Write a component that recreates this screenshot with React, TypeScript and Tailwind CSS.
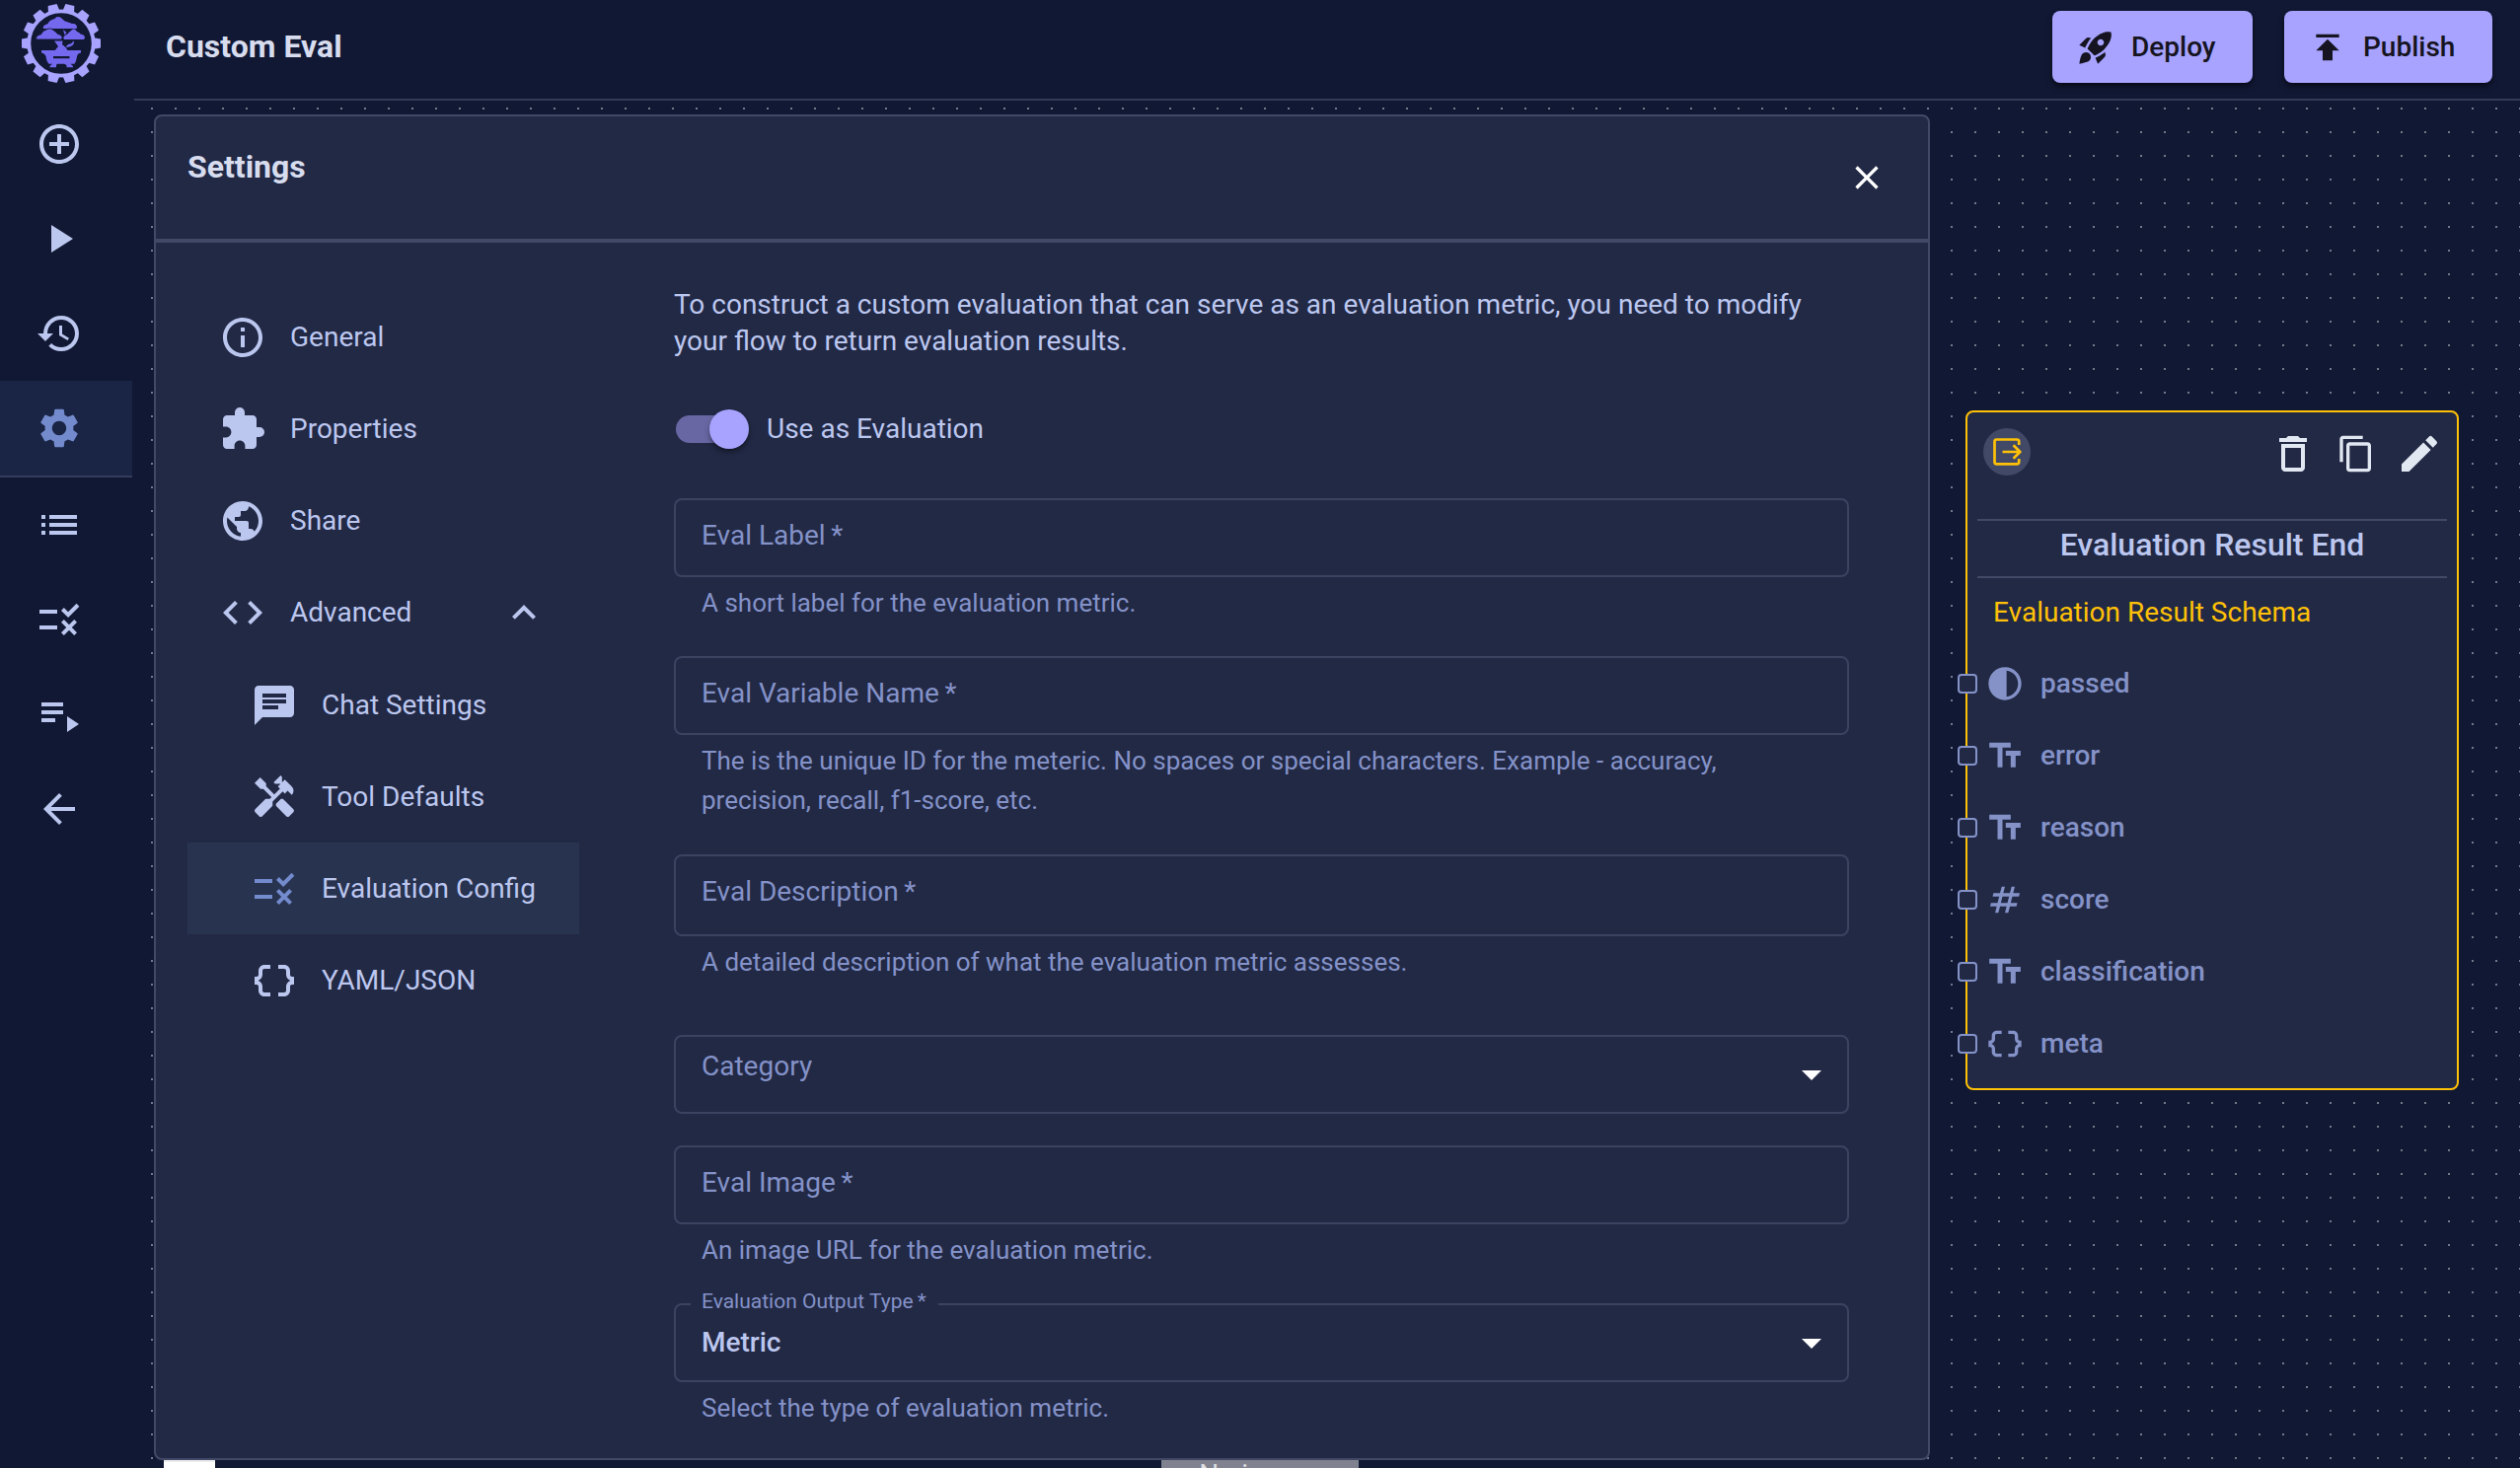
import React from "react";
import {
  MdAddCircleOutline,
  MdArrowBack,
  MdArrowDropDown,
  MdChat,
  MdClose,
  MdCode,
  MdContentCopy,
  MdContrast,
  MdDataObject,
  MdDeleteOutline,
  MdEdit,
  MdExpandLess,
  MdExtension,
  MdHandyman,
  MdHistory,
  MdInfoOutline,
  MdList,
  MdNumbers,
  MdPlayArrow,
  MdPlaylistPlay,
  MdPublic,
  MdPublish,
  MdRocketLaunch,
  MdRule,
  MdSettings,
  MdTextFields,
} from "react-icons/md";
import type { IconType } from "react-icons";

const TEETH = Array.from({ length: 14 }, (_, i) => (i * 360) / 14);

function Logo() {
  return (
    <svg viewBox="-40 -40 80 80" className="size-20" aria-label="Logo" role="img">
      <g fill="#a7a3ff">
        {TEETH.map((angle) => (
          <path key={angle} d="M32 -6 L40 -4.6 V4.6 L32 6 Z" transform={`rotate(${angle})`} />
        ))}
      </g>
      <circle r="32.7" fill="#111833" stroke="#a7a3ff" strokeWidth="3.8" />
      <g fill="#7468ee">
        <path d="M-18 -15 C-19 -18 -16 -19 -13.500 -20 C-12 -24 -8 -24 -6 -25.500 C-4 -28 -1 -27 1 -25 C3 -22.500 5 -22 7 -21.500 C9 -21 10 -20.500 11 -20 C15 -20.500 17 -17.500 15.500 -15 Z" />
        <path d="M-25 -4 C-26.500 -7 -23 -8.500 -20 -9.500 C-19 -13 -16 -13 -15 -14 C-12 -16 -9 -15 -7.500 -13 C-6 -12 -5 -11.500 -3.500 -9.500 C0 -9 2 -6.500 0.500 -4 Z" stroke="#111833" strokeWidth="0.8" />
        <path d="M3 -4 C1 -6.500 4 -8.500 6.500 -9.500 C8 -12 10 -12.500 11 -14 C13.500 -15.500 15 -13.500 16 -12 C17.500 -11.500 18.500 -11 19.500 -9.500 C23 -9 25.500 -6.500 23 -4 Z" />
        <path d="M2 -14 L5.500 -11 L3.500 -8.500 Z" />
        <path d="M-7 -2.500 H1.500 L1 1 L5 4.500 L7 8 H-7 L-3 3 Z" />
        <path d="M5 4 C6 1.500 6 1.500 9 0.500 C11 0 11.500 -1.500 12.500 -2.500 C14 0 11.500 2.500 9.500 3 C8 3.500 6.500 4 5 4 Z" />
        <path
          fillRule="evenodd"
          d="M-20 7 H20 V9.500 C17.500 10 16.500 11 16 13 C15.500 16 15 18.500 13.500 20.700 H9.500 L12 23 V24.300 H5.500 V22 L3 20.700 H-4 L-5 22 V24.300 H-11.500 V23 L-9 20.700 H-12.500 C-14.500 18.500 -15 16 -15.500 13 C-16.500 11 -17.500 10 -20 9.500 Z M-8 13 V15.300 H8.500 V13 Z"
        />
      </g>
    </svg>
  );
}

function ExitIcon() {
  return (
    <svg
      viewBox="0 0 48 48"
      className="size-12"
      fill="none"
      stroke="#ffc107"
      strokeWidth="2.700"
      strokeLinejoin="round"
      aria-hidden="true"
    >
      <path d="M36.200 17V13.500A2 2 0 0 0 34.200 11.500H13.500A2 2 0 0 0 11.500 13.500V34.300A2 2 0 0 0 13.500 36.300H34.200A2 2 0 0 0 36.200 34.300V31" />
      <path d="M19.500 24H37M30.500 17.300L37.300 24L30.500 30.700" />
    </svg>
  );
}

const railItems: { name: string; icon: IconType; active?: boolean }[] = [
  { name: "Add node", icon: MdAddCircleOutline },
  { name: "Run", icon: MdPlayArrow },
  { name: "History", icon: MdHistory },
  { name: "Settings", icon: MdSettings, active: true },
  { name: "List", icon: MdList },
  { name: "Evaluations", icon: MdRule },
  { name: "Batch runs", icon: MdPlaylistPlay },
  { name: "Back", icon: MdArrowBack },
];

function Rail() {
  return (
    <aside className="flex w-[136px] shrink-0 flex-col">
      <div className="h-[98px] pl-[22px] pt-1">
        <Logo />
      </div>
      <nav className="flex w-[134px] flex-col">
        {railItems.map(({ name, icon: Icon, active }) => (
          <button
            key={name}
            type="button"
            aria-label={name}
            className={
              active
                ? "flex h-[98px] items-center border-b-2 border-[#333c5c] bg-[#1a2444] pl-9 text-[#738acd]"
                : "flex h-24 items-center pl-9 text-[#bcc7ef]"
            }
          >
            <Icon className="size-12" />
          </button>
        ))}
      </nav>
    </aside>
  );
}

function TopBar() {
  return (
    <header className="flex h-[102px] items-center gap-8 border-b-2 border-[#333b58] pb-[5px] pl-8 pr-7">
      <h1 className="flex-1 pb-0.5 text-[32px] font-bold text-[#d7dcee]">Custom Eval</h1>
      <button
        type="button"
        className="flex h-[73px] w-[203px] items-center gap-4 rounded-lg bg-[#a7a3ff] pl-6 text-[28px] font-medium text-[#161420] shadow-md shadow-black/50"
      >
        <MdRocketLaunch className="size-10" />
        Deploy
      </button>
      <button
        type="button"
        className="flex h-[73px] w-[211px] items-center gap-4 rounded-lg bg-[#a7a3ff] pl-6 text-[28px] font-medium text-[#161420] shadow-md shadow-black/50"
      >
        <MdPublish className="size-10" />
        Publish
      </button>
    </header>
  );
}

type MenuItem = { name: string; icon: IconType; active?: boolean; open?: boolean };

const mainMenu: MenuItem[] = [
  { name: "General", icon: MdInfoOutline },
  { name: "Properties", icon: MdExtension },
  { name: "Share", icon: MdPublic },
  { name: "Advanced", icon: MdCode, open: true },
];

const advancedMenu: MenuItem[] = [
  { name: "Chat Settings", icon: MdChat },
  { name: "Tool Defaults", icon: MdHandyman },
  { name: "Evaluation Config", icon: MdRule, active: true },
  { name: "YAML/JSON", icon: MdDataObject },
];

function MenuButton({ item, indent }: { item: MenuItem; indent: string }) {
  const { name, icon: Icon, active, open } = item;
  return (
    <button
      type="button"
      aria-expanded={open}
      className={`flex h-[93px] w-full items-center gap-6 pr-8 text-left text-[28px] text-[#bcc7ef] ${indent} ${
        active ? "bg-[#28334f]" : ""
      }`}
    >
      <Icon className={active ? "size-12 shrink-0 text-[#738acd]" : "size-12 shrink-0"} />
      <span className="flex-1 whitespace-nowrap">{name}</span>
      {open && <MdExpandLess className="size-12" />}
    </button>
  );
}

function SettingsMenu() {
  return (
    <nav className="w-[397px] shrink-0 pt-[49px]">
      {mainMenu.map((item) => (
        <MenuButton key={item.name} item={item} indent="pl-8" />
      ))}
      <div className="pt-px">
        {advancedMenu.map((item) => (
          <MenuButton key={item.name} item={item} indent="pl-16" />
        ))}
      </div>
    </nav>
  );
}

function Hint({ children }: { children: React.ReactNode }) {
  return <p className="mt-1.5 px-7 text-[26px] leading-10 text-[#8492c8]">{children}</p>;
}

const boxClass = "w-full rounded-lg border-2 border-[#3b4361] bg-transparent px-[26px] text-[28px] text-[#bcc7ef]";
const labelClass = "pointer-events-none absolute left-7 top-0 text-[28px] text-[#8492c8]";

function TextField({
  id,
  label,
  hint,
  className,
  multiline,
}: {
  id: string;
  label: string;
  hint: string;
  className: string;
  multiline?: boolean;
}) {
  return (
    <div className={className}>
      <div className="relative flex">
        {multiline ? (
          <textarea id={id} rows={1} className={`${boxClass} h-[83px] resize-none py-5`} />
        ) : (
          <input id={id} type="text" className={`${boxClass} h-20`} />
        )}
        <label htmlFor={id} className={`${labelClass} leading-[75px]`}>
          {label}&thinsp;*
        </label>
      </div>
      <Hint>{hint}</Hint>
    </div>
  );
}

function SettingsForm() {
  return (
    <form className="ml-24 min-w-0 flex-1 pr-20 pt-11">
      <p className="text-[28px] leading-[37px] text-[#bcc7ef]">
        To construct a custom evaluation that can serve as an evaluation metric, you need to modify your flow to
        return evaluation results.
      </p>

      <label className="my-8 flex h-[77px] items-center gap-[18px] text-[28px] text-[#bcc7ef]">
        <span className="relative flex h-10 w-[76px] items-center pl-0.5">
          <input
            type="checkbox"
            role="switch"
            defaultChecked
            className="h-7 w-[68px] appearance-none rounded-full bg-[#6867a3]"
          />
          <span className="pointer-events-none absolute right-0 top-0 size-10 rounded-full bg-[#a7a3ff] shadow-md shadow-black/40" />
        </span>
        Use as Evaluation
      </label>

      <TextField
        id="eval-label"
        label="Eval Label"
        hint="A short label for the evaluation metric."
        className="mb-[34px]"
      />
      <TextField
        id="eval-variable"
        label="Eval Variable Name"
        hint="The is the unique ID for the meteric. No spaces or special characters. Example - accuracy, precision, recall, f1-score, etc."
        className="mb-[35px]"
      />
      <TextField
        id="eval-description"
        label="Eval Description"
        hint="A detailed description of what the evaluation metric assesses."
        className="mb-[54px]"
        multiline
      />

      <div className="relative mb-8 flex">
        <select id="category" defaultValue="" className={`${boxClass} h-20 appearance-none`}>
          <option value="" />
        </select>
        <label htmlFor="category" className={`${labelClass} leading-[64px]`}>
          Category
        </label>
        <MdArrowDropDown className="pointer-events-none absolute right-3.5 top-4 size-12 text-white" />
      </div>

      <TextField
        id="eval-image"
        label="Eval Image"
        hint="An image URL for the evaluation metric."
        className="mb-[34px]"
      />

      <div className="relative flex">
        <select
          id="output-type"
          defaultValue="metric"
          className={`${boxClass} h-20 appearance-none font-medium`}
        >
          <option value="metric">Metric</option>
        </select>
        <label
          htmlFor="output-type"
          className="absolute -top-4 left-[17px] bg-[#222945] pl-[11px] pr-3 text-[21px] leading-7 text-[#8492c8]"
        >
          Evaluation Output Type&thinsp;*
        </label>
        <MdArrowDropDown className="pointer-events-none absolute right-3.5 top-4 size-12 text-white" />
      </div>
      <Hint>Select the type of evaluation metric.</Hint>
    </form>
  );
}

function SettingsPanel() {
  return (
    <section className="flex min-w-0 flex-1 flex-col rounded-lg border-2 border-[#414967] bg-[#222945]">
      <div className="flex h-32 items-start justify-between border-b-4 border-[#414967] pl-8 pr-[30px]">
        <h2 className="pt-8 text-[32px] font-bold leading-[38px] text-[#d7dcee]">Settings</h2>
        <button type="button" aria-label="Close" className="mt-[30px] flex size-16 items-center justify-center text-white">
          <MdClose className="size-10" />
        </button>
      </div>
      <div className="flex pl-8">
        <SettingsMenu />
        <SettingsForm />
      </div>
    </section>
  );
}

const ports: { name: string; icon: IconType }[] = [
  { name: "passed", icon: MdContrast },
  { name: "error", icon: MdTextFields },
  { name: "reason", icon: MdTextFields },
  { name: "score", icon: MdNumbers },
  { name: "classification", icon: MdTextFields },
  { name: "meta", icon: MdDataObject },
];

function ResultNode() {
  return (
    <article className="w-[500px] rounded-lg border-2 border-[#ffc107] bg-[#222945] pb-[9px]">
      <div className="flex h-[108px] items-start pl-4 pr-1.5 pt-4 text-[#e2e8f2]">
        <span className="mr-auto rounded-full bg-[#414967]">
          <ExitIcon />
        </span>
        <button type="button" aria-label="Delete" className="flex h-[52px] w-16 items-center justify-center">
          <MdDeleteOutline className="size-12" />
        </button>
        <button type="button" aria-label="Copy" className="flex h-[52px] w-16 items-center justify-center">
          <MdContentCopy className="size-10" />
        </button>
        <button type="button" aria-label="Edit" className="flex h-[52px] w-16 items-center justify-center">
          <MdEdit className="size-12" />
        </button>
      </div>
      <h3 className="mx-2.5 border-y-2 border-[#414967] pb-2 text-center text-[32px] font-medium leading-[48px] text-[#bcc7ef]">
        Evaluation Result End
      </h3>
      <p className="pl-[26px] text-[28px] leading-[70px] text-[#ffc107]">Evaluation Result Schema</p>
      <ul>
        {ports.map(({ name, icon: Icon }) => (
          <li
            key={name}
            className="relative flex h-[73px] items-center gap-4 pl-[18px] text-[28px] font-medium text-[#8492c8]"
          >
            <span className="absolute -left-2.5 size-5 rounded border-2 border-[#8492c8] bg-[#222945]" />
            <Icon className="size-10" />
            {name}
          </li>
        ))}
      </ul>
    </article>
  );
}

export default function App() {
  return (
    <div className='flex min-h-screen bg-[#111833] font-["Roboto",sans-serif]'>
      <Rail />
      <div className="flex min-w-0 flex-1 flex-col">
        <TopBar />
        <main className="flex flex-1 flex-col bg-[conic-gradient(from_270deg_at_2px_2px,#737889_90deg,transparent_0)] bg-[length:24px_24px] bg-[position:17px_7px] pt-3.5">
          <div className="flex flex-1 pl-5">
            <SettingsPanel />
            <div className="w-[598px] shrink-0 pl-9 pt-[300px]">
              <ResultNode />
            </div>
          </div>
          <div className="flex h-2 overflow-hidden pl-[30px]">
            <div className="w-[52px] border-t-2 border-[#eeeeee] bg-white" />
            <div className="ml-[959px] w-[200px] bg-[#80828f] pt-px text-center text-[28px] leading-none text-[#dddee2]">
              No issues
            </div>
          </div>
        </main>
      </div>
    </div>
  );
}
